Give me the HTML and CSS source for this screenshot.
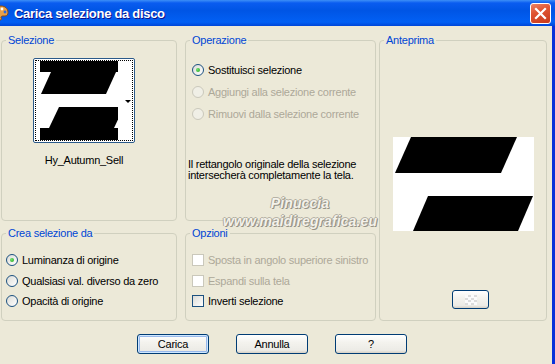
FILE: index.html
```html
<!DOCTYPE html>
<html lang="it">
<head>
    <meta charset="UTF-8">
    <title>Carica selezione da disco</title>
    <link rel="stylesheet" href="styles.css">
</head>
<body>
    <div class="window">
        <div class="titlebar">
            <svg class="app-icon" viewBox="0 0 16 16">
                <path d="M8 1C3.5 1 1 4 1 8s3 7 6 7c1.5 0 1.8-1 1.2-2-.6-1 .2-2 1.5-2H12c2 0 3-1.5 3-3.5C15 3.5 12 1 8 1z" fill="#e8a048" stroke="#8a4a12" stroke-width="1"/>
                <circle cx="5" cy="5" r="1.4" fill="#e02020"/>
                <circle cx="9" cy="4" r="1.4" fill="#ffffff"/>
                <circle cx="12" cy="7" r="1.4" fill="#2a6ae0"/>
                <circle cx="4.5" cy="9.5" r="1.4" fill="#30a030"/>
            </svg>
            <span class="title">Carica selezione da disco</span>
            <div class="close-btn">
                <svg viewBox="0 0 19 19"><path d="M5 5l9 9M14 5l-9 9" stroke="#fff" stroke-width="2.2" stroke-linecap="square"/></svg>
            </div>
        </div>

        <div class="dialog">
            <div class="groups">
                <fieldset class="group group-sel">
                    <legend>Selezione</legend>
                    <div class="thumb-pick">
                        <div class="thumb">
                            <div class="thumb-focus">
                                <svg class="thumb-img" viewBox="0 0 78 79">
                                    <rect width="78" height="79" fill="#fff"/>
                                    <rect width="78" height="11" fill="#000"/>
                                    <polygon points="11,11 76,11 66,33 1,33" fill="#000"/>
                                    <polygon points="19,46 84,46 74,67 9,67" fill="#000"/>
                                    <rect y="67" width="78" height="12" fill="#000"/>
                                </svg>
                                <span class="thumb-arrow"></span>
                            </div>
                        </div>
                        <div class="thumb-name">Hy_Autumn_Sell</div>
                    </div>
                </fieldset>

                <fieldset class="group group-op">
                    <legend>Operazione</legend>
                    <div class="options">
                        <div class="opt"><span class="radio checked"></span>Sostituisci selezione</div>
                        <div class="opt disabled"><span class="radio"></span>Aggiungi alla selezione corrente</div>
                        <div class="opt disabled"><span class="radio"></span>Rimuovi dalla selezione corrente</div>
                    </div>
                    <p class="note">Il rettangolo originale della selezione<br>intersecherà completamente la tela.</p>
                </fieldset>

                <fieldset class="group group-prev">
                    <legend>Anteprima</legend>
                    <svg class="preview" viewBox="0 0 141 94">
                        <rect width="141" height="94" fill="#fff"/>
                        <polygon points="18,0 124,0 108,36 2,36" fill="#000"/>
                        <polygon points="35,59 140,59 125,94 20,94" fill="#000"/>
                    </svg>
                    <button class="btn small-btn"><span class="checker"></span></button>
                </fieldset>

                <fieldset class="group group-crea">
                    <legend>Crea selezione da</legend>
                    <div class="options">
                        <div class="opt"><span class="radio checked"></span>Luminanza di origine</div>
                        <div class="opt"><span class="radio"></span>Qualsiasi val. diverso da zero</div>
                        <div class="opt"><span class="radio"></span>Opacità di origine</div>
                    </div>
                </fieldset>

                <fieldset class="group group-opz">
                    <legend>Opzioni</legend>
                    <div class="options">
                        <div class="opt disabled"><span class="check"></span>Sposta in angolo superiore sinistro</div>
                        <div class="opt disabled"><span class="check"></span>Espandi sulla tela</div>
                        <div class="opt"><span class="check"></span>Inverti selezione</div>
                    </div>
                </fieldset>
            </div>

            <div class="actions">
                <button class="btn default">Carica</button>
                <button class="btn">Annulla</button>
                <button class="btn">?</button>
            </div>
        </div>

        <div class="watermark">Pinuccia<br>www.maidiregrafica.eu</div>
    </div>
</body>
</html>
```

FILE: styles.css
```css
* {
    margin: 0;
    padding: 0;
    box-sizing: border-box;
}

body {
    width: 555px;
    height: 364px;
    overflow: hidden;
    font-family: "Liberation Sans", Arial, sans-serif;
    font-size: 11px;
    letter-spacing: -0.25px;
    color: #000;
}

.window {
    width: 555px;
    height: 364px;
    background: #0831d9;
    display: flex;
    flex-direction: column;
    position: relative;
}

/* title bar */
.titlebar {
    height: 26px;
    display: flex;
    align-items: center;
    background: linear-gradient(180deg, #3d8ff7 0, #0a5cf0 3px, #0055e5 40%, #0260f4 85%, #0046d8 100%);
    overflow: hidden;
}

.app-icon {
    width: 16px;
    height: 16px;
    margin-left: -7px;
    flex-shrink: 0;
}

.title {
    margin-left: 5px;
    color: #fff;
    font-weight: bold;
    font-size: 13px;
    letter-spacing: -0.3px;
    text-shadow: 1px 1px #0f1089;
}

.close-btn {
    margin-left: auto;
    margin-right: 4px;
    width: 21px;
    height: 21px;
    flex-shrink: 0;
    border: 1px solid #fff;
    border-radius: 3px;
    background-color: #d9472b;
    background-image: linear-gradient(160deg, #ec8467 0, #df5432 40%, #c8391a 100%);
    display: flex;
    align-items: center;
    justify-content: center;
}

.close-btn svg {
    width: 19px;
    height: 19px;
    display: block;
}

/* dialog body */
.dialog {
    flex: 1;
    margin-right: 3px;
    background: #ece9d8;
    padding: 8px 0 0 1px;
}

.groups {
    display: grid;
    grid-template-columns: 176px 8px 191px 3px 168px;
    grid-template-rows: 187px 94px;
    row-gap: 6px;
    grid-template-areas:
        "sel . op . prev"
        "crea . opz . prev";
}

.group {
    border: 1px solid #d0d0bf;
    border-radius: 4px;
    min-width: 0;
}

.group legend {
    margin-left: 4px;
    padding: 0 2px;
    color: #0046d5;
    line-height: 13px;
}

.group-sel { grid-area: sel; }
.group-op { grid-area: op; }
.group-prev { grid-area: prev; }
.group-crea { grid-area: crea; }
.group-opz { grid-area: opz; }

/* thumbnail picker */
.thumb-pick {
    width: 102px;
    margin: 11px 0 0 31px;
}

.thumb {
    height: 85px;
    border: 1px solid #2b5a8a;
    border-radius: 2px;
    background: #fff;
    padding: 1px;
}

.thumb-focus {
    height: 100%;
    border: 1px dotted #000;
    display: flex;
    align-items: center;
    padding-left: 4px;
}

.thumb-img {
    width: 78px;
    height: 79px;
    display: block;
}

.thumb-arrow {
    margin-left: 7px;
    margin-top: 2px;
    border-left: 3px solid transparent;
    border-right: 3px solid transparent;
    border-top: 3px solid #000;
}

.thumb-name {
    margin-top: 11px;
    text-align: center;
    line-height: 13px;
}

/* radio / check rows */
.options {
    margin-top: 12px;
    margin-left: 6px;
}

.opt {
    display: flex;
    align-items: center;
    gap: 4px;
    height: 22px;
    white-space: nowrap;
}

.opt.disabled {
    color: #aca899;
}

.group-crea .options,
.group-opz .options {
    margin-top: 10px;
}

.group-crea .options {
    margin-left: 4px;
}

.group-crea .opt,
.group-opz .opt {
    height: 20.5px;
}

.radio {
    width: 12px;
    height: 12px;
    border: 1px solid #1c5180;
    border-radius: 50%;
    background: linear-gradient(135deg, #dcdcd7, #fff);
    display: flex;
    align-items: center;
    justify-content: center;
    flex-shrink: 0;
}

.radio.checked::after {
    content: "";
    width: 4px;
    height: 4px;
    border-radius: 50%;
    background: radial-gradient(circle at 35% 35%, #6fe36b, #21a121);
}

.disabled .radio {
    border-color: #cac8bb;
    background: #f0efe6;
}

.check {
    width: 12px;
    height: 12px;
    border: 1px solid #1c5180;
    background: linear-gradient(135deg, #dcdcd7, #fff);
    flex-shrink: 0;
}

.disabled .check {
    border-color: #cac8bb;
    background: #fff;
}

.note {
    margin: 34px 0 0 2px;
    line-height: 11px;
}

/* preview */
.group-prev {
    display: flex;
    flex-direction: column;
    align-items: center;
}

.preview {
    width: 141px;
    height: 94px;
    margin-top: 90px;
    display: block;
}

.small-btn {
    width: 37px;
    height: 19px;
    margin-top: 59px;
    align-self: flex-start;
    margin-left: 72px;
}

.checker {
    width: 12px;
    height: 10px;
    background: repeating-conic-gradient(#dcdcdc 0 25%, #fbfbfb 0 50%) 0 0 / 6px 5px;
}

/* buttons */
.btn {
    font-family: inherit;
    font-size: 11px;
    letter-spacing: inherit;
    color: #000;
    border: 1px solid #003c74;
    border-radius: 3px;
    background: linear-gradient(180deg, #fff 0, #f4f3ee 40%, #ecebe6 85%, #d6d0c5 100%);
    display: flex;
    align-items: center;
    justify-content: center;
}

.btn.default {
    box-shadow: inset 0 0 0 1px #cee7ff, inset 0 0 0 2px #98b8ea;
}

.actions {
    display: flex;
    gap: 27px;
    padding-left: 136px;
    margin-top: 13px;
}

.actions .btn {
    width: 72px;
    height: 20px;
}

/* watermark over the dialog */
.watermark {
    position: absolute;
    left: 222px;
    top: 194px;
    width: 156px;
    text-align: center;
    font-style: italic;
    font-weight: bold;
    font-size: 14px;
    letter-spacing: 0.1px;
    line-height: 18px;
    color: #f4f2ea;
    text-shadow: 1px 1px 0 #969286, -1px 0 0 #aeaa9e, 0 -1px 0 #b6b2a6, 1px 0 0 #a09c90;
}
```
